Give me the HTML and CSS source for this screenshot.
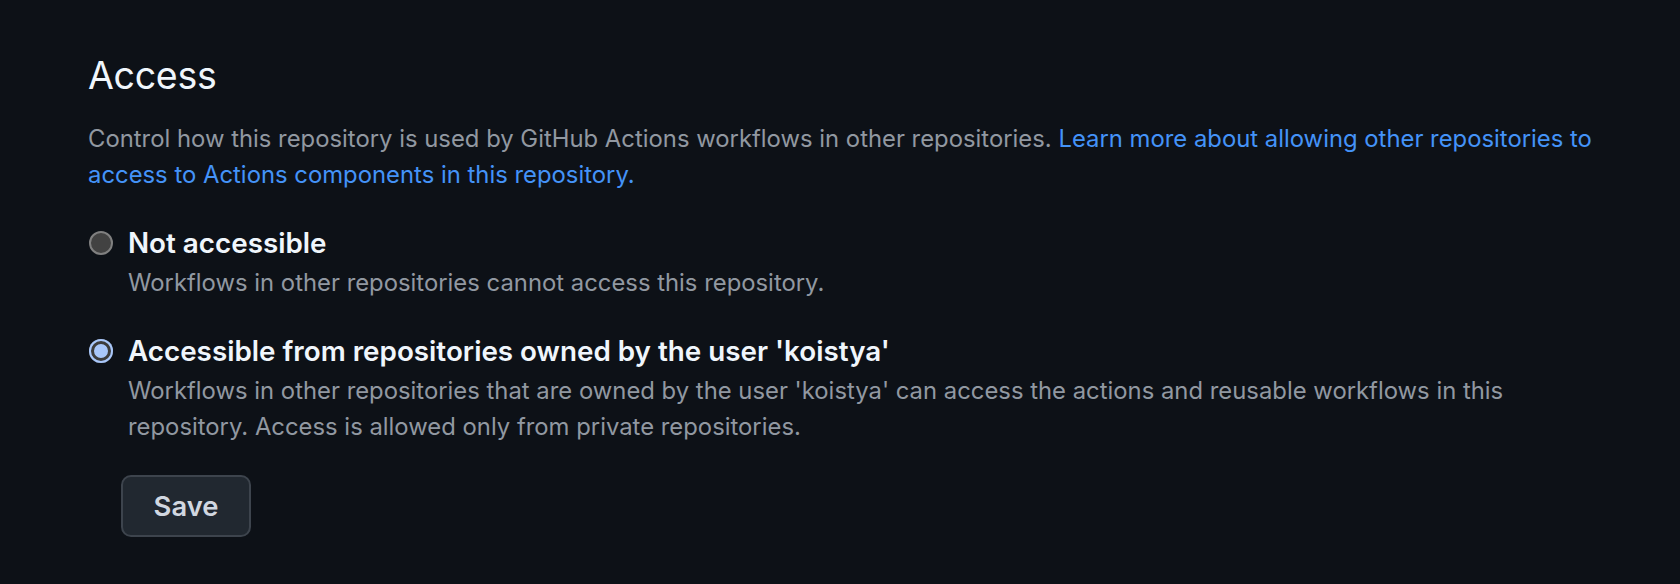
FILE: index.html
```html
<!DOCTYPE html>
<html lang="en">
<head>
<meta charset="utf-8">
<title>Access</title>
<link rel="stylesheet" href="styles.css">
</head>
<body>
<main class="page">
  <h2 class="heading">Access</h2>
  <p class="desc">Control how this repository is used by GitHub Actions workflows in other repositories. <a class="link" href="#">Learn more about allowing other repositories to access to Actions components in this repository.</a></p>
  <div class="options">
    <label class="option">
      <span class="radio"></span>
      <span class="option-body">
        <span class="option-title">Not accessible</span>
        <span class="option-note">Workflows in other repositories cannot access this repository.</span>
      </span>
    </label>
    <label class="option">
      <span class="radio checked"></span>
      <span class="option-body">
        <span class="option-title">Accessible from repositories owned by the user 'koistya'</span>
        <span class="option-note">Workflows in other repositories that are owned by the user 'koistya' can access the actions and reusable workflows in this repository. Access is allowed only from private repositories.</span>
      </span>
    </label>
  </div>
  <div class="actions">
    <button class="btn" type="button">Save</button>
  </div>
</main>
</body>
</html>
```
FILE: styles.css
```css
html, body {
  margin: 0;
  padding: 0;
  background: #0d1117;
}
body {
  font-family: Inter, "Noto Sans", sans-serif;
  color: #e6edf3;
  height: 584px;
  overflow: hidden;
}
.page {
  width: 1530px;
  padding: 52px 0 0 88px;
}
.heading {
  margin: 0;
  font-size: 37.5px;
  font-weight: 400;
  line-height: 48px;
  color: #f0f6fc;
  letter-spacing: -0.3px;
}
.desc {
  margin: 21px 0 0;
  font-size: 23.85px;
  line-height: 36px;
  color: #9198a1;
}
.link {
  color: #4493f8;
  text-decoration: none;
}
.options {
  margin-top: 32px;
  display: flex;
  flex-direction: column;
  gap: 32px;
}
.option {
  display: flex;
  align-items: flex-start;
  gap: 15px;
  margin-left: 1px;
}
.radio {
  flex: none;
  width: 24px;
  height: 24px;
  margin-top: 6px;
  border-radius: 50%;
  box-sizing: border-box;
  background: #424242;
  border: 2px solid #808080;
}
.radio.checked {
  border: none;
  background: #a8c7fa;
  box-shadow: inset 0 0 0 2px #a8c7fa, inset 0 0 0 5px #3c3c3c;
}
.option-body {
  display: flex;
  flex-direction: column;
}
.option-title {
  font-size: 27.8px;
  font-weight: 600;
  line-height: 36px;
  color: #f0f6fc;
}
.option-note {
  font-size: 23.85px;
  line-height: 36px;
  color: #9198a1;
  margin-top: 4px;
}
.actions {
  margin-top: 30px;
  padding-left: 33px;
}
.btn {
  font-family: inherit;
  font-size: 27.4px;
  font-weight: 600;
  color: #d1d7e0;
  background: #212830;
  border: 2px solid #3d444d;
  border-radius: 10px;
  width: 130px;
  height: 62px;
  padding: 0;
}
```
